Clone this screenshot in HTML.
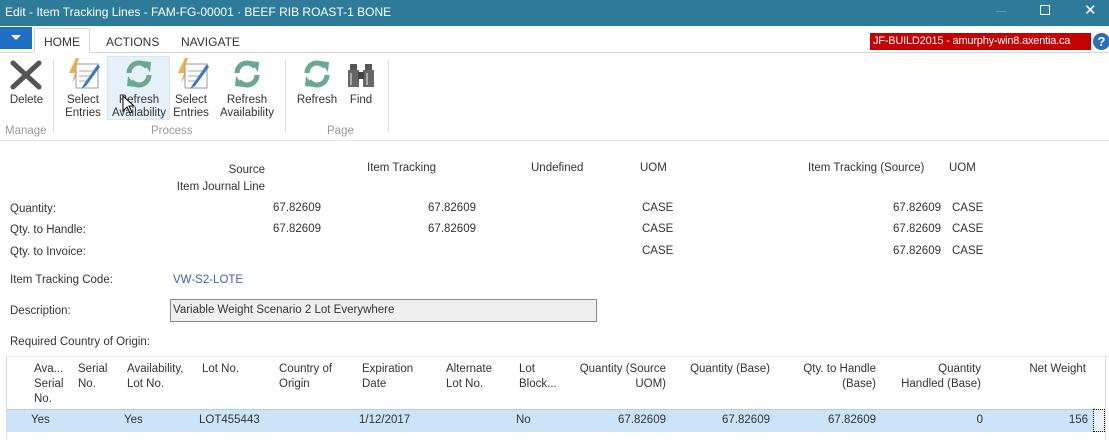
<!DOCTYPE html>
<html><head><meta charset="utf-8"><style>
*{margin:0;padding:0;box-sizing:border-box}
body{width:1109px;height:439px;overflow:hidden;background:#fff;font-family:"Liberation Sans",sans-serif;font-size:11.5px;color:#333;position:relative}
.a{position:absolute;white-space:nowrap}
.r{text-align:right}
.c{text-align:center}
.m{top:1px}
</style></head><body>
<div class="a" style="left:0;top:0;width:1109px;height:26px;background:#2d7b99"></div>
<div class="a" style="left:5px;top:5px;color:#fff;font-size:12px">Edit - Item Tracking Lines - FAM-FG-00001 · BEEF RIB ROAST-1 BONE</div>
<div class="a" style="left:996px;top:11px;width:10px;height:1px;background:#5c9ab3"></div>
<div class="a" style="left:1040px;top:5px;width:10px;height:10px;border:1px solid #fff"></div>
<div class="a" style="left:1084px;top:1px;color:#fff;font-size:15px">✕</div>
<div class="a" style="left:0;top:27px;width:32px;height:22px;background:#1f6fc5"></div>
<div class="a" style="left:11px;top:35px;width:0;height:0;border-left:5px solid transparent;border-right:5px solid transparent;border-top:5px solid #fff"></div>
<div class="a" style="left:34px;top:28px;width:56px;height:25px;border:1px solid #d6d6d6;border-bottom:none;background:#fff"></div>
<div class="a" style="left:0;top:52px;width:1109px;height:1px;background:#d6d6d6"></div>
<div class="a" style="left:34px;top:52px;width:56px;height:1px;background:#fff"></div>
<div class="a" style="left:44px;top:35px;font-size:12px">HOME</div>
<div class="a" style="left:106px;top:35px;font-size:12px">ACTIONS</div>
<div class="a" style="left:181px;top:35px;font-size:12px">NAVIGATE</div>
<div class="a" style="left:870px;top:33px;width:221px;height:17px;background:#c50000;color:#fff;font-size:11px;letter-spacing:-0.2px;padding:2px 3px;overflow:hidden">JF-BUILD2015 - amurphy-win8.axentia.ca</div>
<div class="a" style="left:1093px;top:33px;width:17px;height:17px;border-radius:50%;background:#2b6fb8;color:#fff;font-weight:bold;font-size:13px;text-align:center;line-height:17px">?</div>

<!-- ribbon -->
<div class="a" style="left:107px;top:56px;width:63px;height:64px;background:#e6f1f9;border:1px solid #d4e6f4"></div>
<svg class="a" style="left:10px;top:60px" width="32" height="30"><path d="M3 3L29 27M29 3L3 27" stroke="#555" stroke-width="5" stroke-linecap="round"/></svg>
<svg class="a" style="left:66px;top:58px" width="36" height="34"><path d="M10 0L3 15h6l-3 10 9-14h-6l4-11z" fill="#f0b040"/><rect x="10" y="6" width="22" height="24" fill="#fff" stroke="#999"/><path d="M13 13h16M13 18h14M13 23h10" stroke="#aaa"/><path d="M32 6L18 26l-3 5 5-3L34 9z" fill="#3b78c4"/></svg>
<svg class="a" style="left:175px;top:58px" width="36" height="34"><path d="M10 0L3 15h6l-3 10 9-14h-6l4-11z" fill="#f0b040"/><rect x="10" y="6" width="22" height="24" fill="#fff" stroke="#999"/><path d="M13 13h16M13 18h14M13 23h10" stroke="#aaa"/><path d="M32 6L18 26l-3 5 5-3L34 9z" fill="#3b78c4"/></svg>
<svg class="a" style="left:124px;top:59px" width="30" height="30"><g fill="none" stroke="#6aa88f" stroke-width="5"><path d="M5 14a10 10 0 0 1 18-6"/><path d="M25 16a10 10 0 0 1-18 6"/></g><path d="M18 2l9 1-1 10z" fill="#6aa88f"/><path d="M12 28l-9-1 1-10z" fill="#6aa88f"/></svg>
<svg class="a" style="left:232px;top:59px" width="30" height="30"><g fill="none" stroke="#6aa88f" stroke-width="5"><path d="M5 14a10 10 0 0 1 18-6"/><path d="M25 16a10 10 0 0 1-18 6"/></g><path d="M18 2l9 1-1 10z" fill="#6aa88f"/><path d="M12 28l-9-1 1-10z" fill="#6aa88f"/></svg>
<svg class="a" style="left:302px;top:59px" width="30" height="30"><g fill="none" stroke="#6aa88f" stroke-width="5"><path d="M5 14a10 10 0 0 1 18-6"/><path d="M25 16a10 10 0 0 1-18 6"/></g><path d="M18 2l9 1-1 10z" fill="#6aa88f"/><path d="M12 28l-9-1 1-10z" fill="#6aa88f"/></svg>
<svg class="a" style="left:347px;top:62px" width="28" height="26"><rect x="3" y="2" width="7" height="6" fill="#555"/><rect x="18" y="2" width="7" height="6" fill="#555"/><rect x="1" y="8" width="11" height="17" fill="#666"/><rect x="16" y="8" width="11" height="17" fill="#666"/><rect x="11" y="10" width="6" height="7" fill="#444"/><path d="M4 11v12M20 11v12" stroke="#aaa" stroke-width="2"/></svg>
<div class="a c" style="left:0;top:94px;width:53px">Delete</div>
<div class="a c" style="left:57px;top:94px;width:52px;line-height:13px">Select<br>Entries</div>
<div class="a c" style="left:105px;top:94px;width:68px;line-height:13px">Refresh<br>Availability</div>
<div class="a c" style="left:165px;top:94px;width:52px;line-height:13px">Select<br>Entries</div>
<div class="a c" style="left:213px;top:94px;width:68px;line-height:13px">Refresh<br>Availability</div>
<div class="a c" style="left:292px;top:94px;width:50px">Refresh</div>
<div class="a c" style="left:342px;top:94px;width:38px">Find</div>
<div class="a" style="left:5px;top:125px;color:#999">Manage</div>
<div class="a" style="left:151px;top:125px;color:#999">Process</div>
<div class="a" style="left:327px;top:125px;color:#999">Page</div>
<div class="a" style="left:53px;top:60px;width:1px;height:72px;background:#ddd"></div>
<div class="a" style="left:285px;top:60px;width:1px;height:72px;background:#ddd"></div>
<div class="a" style="left:388px;top:60px;width:1px;height:72px;background:#ddd"></div>
<div class="a" style="left:0;top:140px;width:1109px;height:1px;background:#e3e3e3"></div>
<svg class="a" style="left:122px;top:95px" width="14" height="20"><path d="M1 1v15l4-4 3 6 2-1-3-6h5z" fill="#fff" stroke="#000"/></svg>

<div style="position:absolute;left:0;top:1px;width:1109px;height:439px">
<div class="a r" style="left:150px;top:161px;width:115px;line-height:17px">Source<br>Item Journal Line</div>
<div class="a" style="left:367px;top:161px">Item Tracking</div>
<div class="a" style="left:531px;top:161px">Undefined</div>
<div class="a" style="left:640px;top:161px">UOM</div>
<div class="a" style="left:808px;top:161px">Item Tracking (Source)</div>
<div class="a" style="left:949px;top:161px">UOM</div>

<div class="a" style="left:10px;top:202px">Quantity:</div>
<div class="a" style="left:10px;top:223px">Qty. to Handle:</div>
<div class="a" style="left:10px;top:245px">Qty. to Invoice:</div>
<div class="a r" style="left:220px;top:201px;width:101px">67.82609</div>
<div class="a r" style="left:375px;top:201px;width:101px">67.82609</div>
<div class="a r" style="left:220px;top:222px;width:101px">67.82609</div>
<div class="a r" style="left:375px;top:222px;width:101px">67.82609</div>
<div class="a" style="left:642px;top:201px">CASE</div>
<div class="a" style="left:642px;top:222px">CASE</div>
<div class="a" style="left:642px;top:244px">CASE</div>
<div class="a r" style="left:840px;top:201px;width:101px">67.82609</div>
<div class="a r" style="left:840px;top:222px;width:101px">67.82609</div>
<div class="a r" style="left:840px;top:244px;width:101px">67.82609</div>
<div class="a" style="left:952px;top:201px">CASE</div>
<div class="a" style="left:952px;top:222px">CASE</div>
<div class="a" style="left:952px;top:244px">CASE</div>

<div class="a" style="left:10px;top:273px">Item Tracking Code:</div>
<div class="a" style="left:173px;top:273px;color:#3a62b5">VW-S2-LOTE</div>
<div class="a" style="left:10px;top:304px">Description:</div>
<div class="a" style="left:10px;top:335px">Required Country of Origin:</div>
</div>
<div class="a" style="left:170px;top:299px;width:427px;height:23px;background:#efefef;border:1px solid #888;padding:4px 2px">Variable Weight Scenario 2 Lot Everywhere</div>

<!-- grid -->
<div class="a" style="left:6px;top:356px;width:1px;height:83px;background:#ddd"></div>
<div class="a" style="left:6px;top:356px;width:1103px;height:1px;background:#eee"></div>
<div class="a" style="left:7px;top:409px;width:1098px;height:23px;background:#cce4f7;border-top:1px solid #bcd"></div>
<div class="a" style="left:1093px;top:409px;width:12px;height:23px;border:1px dotted #000;background:#e8f2fb"></div>
<div class="a" style="left:1105px;top:356px;width:1px;height:83px;background:#ddd"></div>
<div style="line-height:15px">
<div class="a" style="left:34px;top:362px">Ava...<br>Serial<br>No.</div>
<div class="a" style="left:78px;top:362px">Serial<br>No.</div>
<div class="a" style="left:127px;top:362px">Availability,<br>Lot No.</div>
<div class="a" style="left:202px;top:362px">Lot No.</div>
<div class="a" style="left:279px;top:362px">Country of<br>Origin</div>
<div class="a" style="left:362px;top:362px">Expiration<br>Date</div>
<div class="a" style="left:446px;top:362px">Alternate<br>Lot No.</div>
<div class="a" style="left:519px;top:362px">Lot<br>Block...</div>
<div class="a r" style="left:560px;top:362px;width:106px">Quantity (Source<br>UOM)</div>
<div class="a r" style="left:670px;top:362px;width:100px">Quantity (Base)</div>
<div class="a r" style="left:770px;top:362px;width:106px">Qty. to Handle<br>(Base)</div>
<div class="a r" style="left:880px;top:362px;width:101px">Quantity<br>Handled (Base)</div>
<div class="a r" style="left:990px;top:362px;width:96px">Net Weight</div>
</div>
<div class="a" style="left:31px;top:414px">Yes</div>
<div class="a" style="left:124px;top:414px">Yes</div>
<div class="a" style="left:199px;top:414px">LOT455443</div>
<div class="a" style="left:359px;top:414px">1/12/2017</div>
<div class="a" style="left:516px;top:414px">No</div>
<div class="a r" style="left:560px;top:414px;width:106px">67.82609</div>
<div class="a r" style="left:670px;top:414px;width:100px">67.82609</div>
<div class="a r" style="left:770px;top:414px;width:106px">67.82609</div>
<div class="a r" style="left:880px;top:414px;width:103px">0</div>
<div class="a r" style="left:990px;top:414px;width:98px">156</div>
</body></html>
